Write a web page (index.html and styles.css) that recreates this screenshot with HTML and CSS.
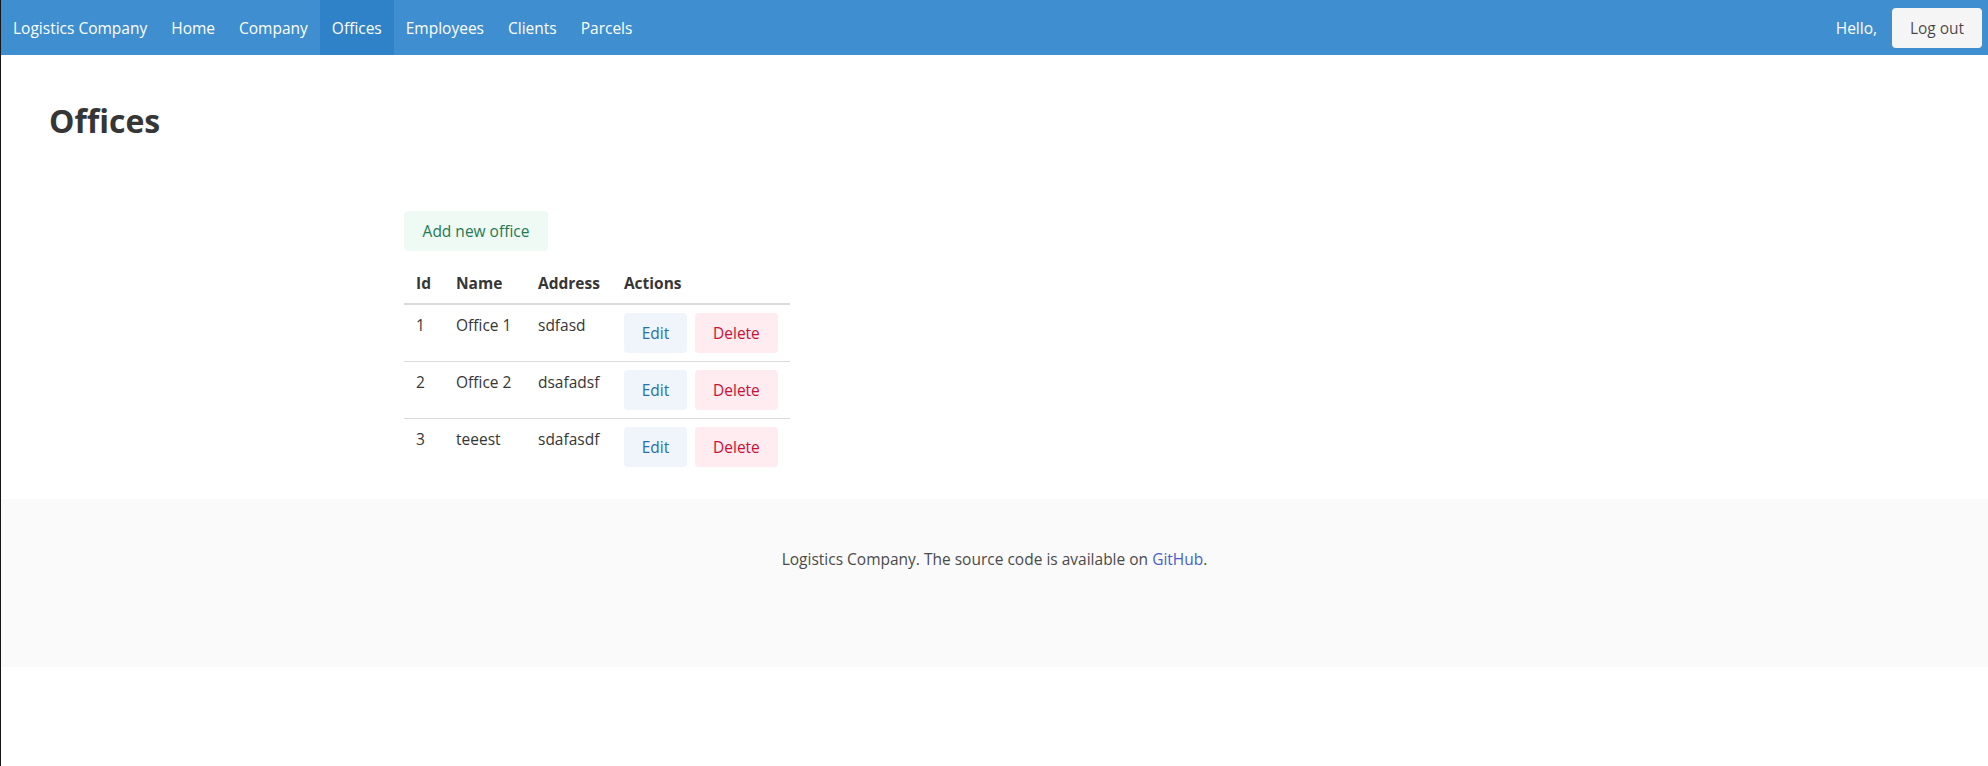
FILE: index.html
```html
<!DOCTYPE html>
<html lang="en">
<head>
<meta charset="utf-8">
<title>Offices - Logistics Company</title>
<link rel="stylesheet" href="styles.css">
</head>
<body>
<nav class="navbar">
  <div class="navbar-start">
    <a class="navbar-item brand" href="#">Logistics Company</a>
    <a class="navbar-item" href="#">Home</a>
    <a class="navbar-item" href="#">Company</a>
    <a class="navbar-item is-active" href="#">Offices</a>
    <a class="navbar-item" href="#">Employees</a>
    <a class="navbar-item" href="#">Clients</a>
    <a class="navbar-item" href="#">Parcels</a>
  </div>
  <div class="navbar-end">
    <span class="navbar-item hello">Hello,</span>
    <div class="navbar-item button-item">
      <a class="button is-light logout" href="#">Log out</a>
    </div>
  </div>
</nav>

<section class="section">
  <h1 class="title">Offices</h1>
  <div class="office-list">
    <a class="button is-success-light add-button" href="#">Add new office</a>
    <table class="table">
      <thead>
        <tr>
          <th class="col-id">Id</th>
          <th class="col-name">Name</th>
          <th class="col-address">Address</th>
          <th class="col-actions">Actions</th>
        </tr>
      </thead>
      <tbody>
        <tr>
          <td>1</td>
          <td>Office 1</td>
          <td>sdfasd</td>
          <td><div class="buttons"><a class="button is-info-light" href="#">Edit</a><a class="button is-danger-light" href="#">Delete</a></div></td>
        </tr>
        <tr>
          <td>2</td>
          <td>Office 2</td>
          <td>dsafadsf</td>
          <td><div class="buttons"><a class="button is-info-light" href="#">Edit</a><a class="button is-danger-light" href="#">Delete</a></div></td>
        </tr>
        <tr>
          <td>3</td>
          <td>teeest</td>
          <td>sdafasdf</td>
          <td><div class="buttons"><a class="button is-info-light" href="#">Edit</a><a class="button is-danger-light" href="#">Delete</a></div></td>
        </tr>
      </tbody>
    </table>
  </div>
</section>

<footer class="footer">
  <p>Logistics Company. The source code is available on <a class="footer-link" href="#">GitHub</a>.</p>
</footer>
</body>
</html>
```

FILE: styles.css
```css
html {
  background: #ffffff;
}

body {
  margin: 0;
  min-height: 766px;
  border-left: 1px solid #161616;
  font-family: "Open Sans", "Noto Sans", sans-serif;
  font-size: 15.5px;
  line-height: 24px;
  color: #4a4a4a;
  background: #ffffff;
}

a {
  text-decoration: none;
}

/* Navbar */
.navbar {
  display: flex;
  justify-content: space-between;
  align-items: stretch;
  height: 55px;
  background: #3e8ed0;
}

.navbar-start,
.navbar-end {
  display: flex;
  align-items: stretch;
}

.navbar-item {
  display: flex;
  align-items: center;
  padding: 0 12px;
  color: #ffffff;
  font-size: 15.5px;
}

.navbar-item.is-active {
  background: #2f82c7;
}

.navbar-item.button-item {
  padding: 0 6px 0 3px;
}

/* Buttons */
.button {
  display: inline-flex;
  align-items: center;
  justify-content: center;
  height: 40px;
  box-sizing: border-box;
  padding: 0 16px;
  border: 1px solid transparent;
  border-radius: 4px;
  font-size: 15.5px;
  line-height: 24px;
  white-space: nowrap;
}

.button.is-light {
  background: #f5f5f5;
  color: rgba(0, 0, 0, 0.72);
}

.button.logout {
  width: 90px;
}

.button.is-success-light {
  background: #effaf5;
  color: #257953;
}

.button.is-info-light {
  background: #eff5fb;
  color: #296fa8;
}

.button.is-danger-light {
  background: #feecf0;
  color: #cc0f35;
}

/* Section */
.section {
  padding: 48px 48px 0;
}

.title {
  margin: 0;
  font-size: 32px;
  line-height: 36px;
  font-weight: 700;
  color: #363636;
}

.office-list {
  margin: 72px 0 0 355px;
}

.add-button {
  width: 144px;
  margin-bottom: 12px;
}

/* Table */
.table {
  border-collapse: collapse;
  border-spacing: 0;
  margin-bottom: 24px;
  color: #363636;
}

.table th,
.table td {
  padding: 8px 12px;
  text-align: left;
  vertical-align: top;
  box-sizing: border-box;
}

.table th {
  font-weight: 700;
  color: #363636;
  border-bottom: 2px solid #dbdbdb;
}

.table td {
  border-bottom: 1px solid #dbdbdb;
}

.table tbody tr:last-child td {
  border-bottom: 0;
}

.col-id { width: 40px; }
.col-name { width: 82px; }
.col-address { width: 85px; }
.col-actions { width: 178px; }

.buttons {
  display: flex;
  gap: 8px;
}

.buttons .is-info-light { width: 63px; }
.buttons .is-danger-light { width: 83px; }

/* Footer */
.footer {
  background: #fafafa;
  padding: 48px 24px 96px;
  text-align: center;
  color: #4a4a4a;
}

.footer p {
  margin: 0;
}

.footer-link {
  color: #485fc7;
}
```
